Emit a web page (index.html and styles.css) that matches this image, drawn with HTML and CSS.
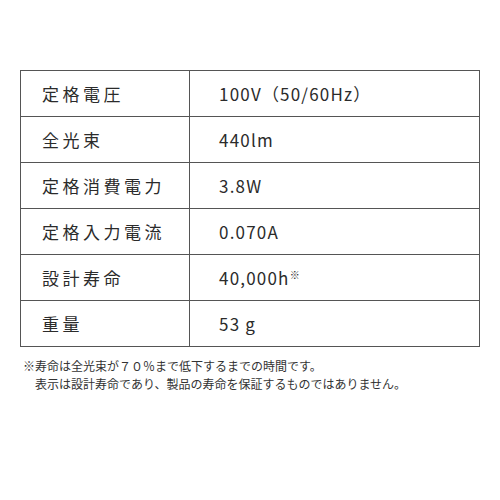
FILE: index.html
```html
<!DOCTYPE html>
<html lang="ja">
<head>
<meta charset="utf-8">
<link rel="stylesheet" href="styles.css">
</head>
<body>
<div class="page">
  <table class="spec">
    <tr><th>定格電圧</th><td>100V（50/60Hz）</td></tr>
    <tr><th>全光束</th><td>440lm</td></tr>
    <tr><th>定格消費電力</th><td>3.8W</td></tr>
    <tr><th>定格入力電流</th><td>0.070A</td></tr>
    <tr><th>設計寿命</th><td>40,000h<span class="mark">※</span></td></tr>
    <tr><th>重量</th><td>53 g</td></tr>
  </table>
  <div class="note">
    <p>※寿命は全光束が７０％まで低下するまでの時間です。</p>
    <p class="indent">表示は設計寿命であり、製品の寿命を保証するものではありません。</p>
  </div>
</div>
</body>
</html>
```
FILE: styles.css
```css
html, body { margin: 0; padding: 0; background: #fff; }
body { font-family: "Noto Sans CJK JP", "Noto Sans", sans-serif; color: #2b2b2b; }
.page { padding: 70px 20px 0 20px; }
.spec { width: 460px; border-collapse: collapse; }
.spec th, .spec td {
  border: 1px solid #555;
  height: 45px;
  padding: 0;
  font-weight: normal;
  text-align: left;
  font-size: 17px;
  line-height: 1;
  vertical-align: middle;
}
.spec th { width: 147px; padding-left: 21px; letter-spacing: 3.5px; }
.spec td { padding-left: 29px; letter-spacing: 1.2px; }
.mark { font-size: 10px; vertical-align: 6px; letter-spacing: 0; }
.note { margin-top: 10px; padding-left: 3px; font-size: 12px; line-height: 18px; color: #333; }
.note p { margin: 0; }
.note .indent { padding-left: 12px; }
```
